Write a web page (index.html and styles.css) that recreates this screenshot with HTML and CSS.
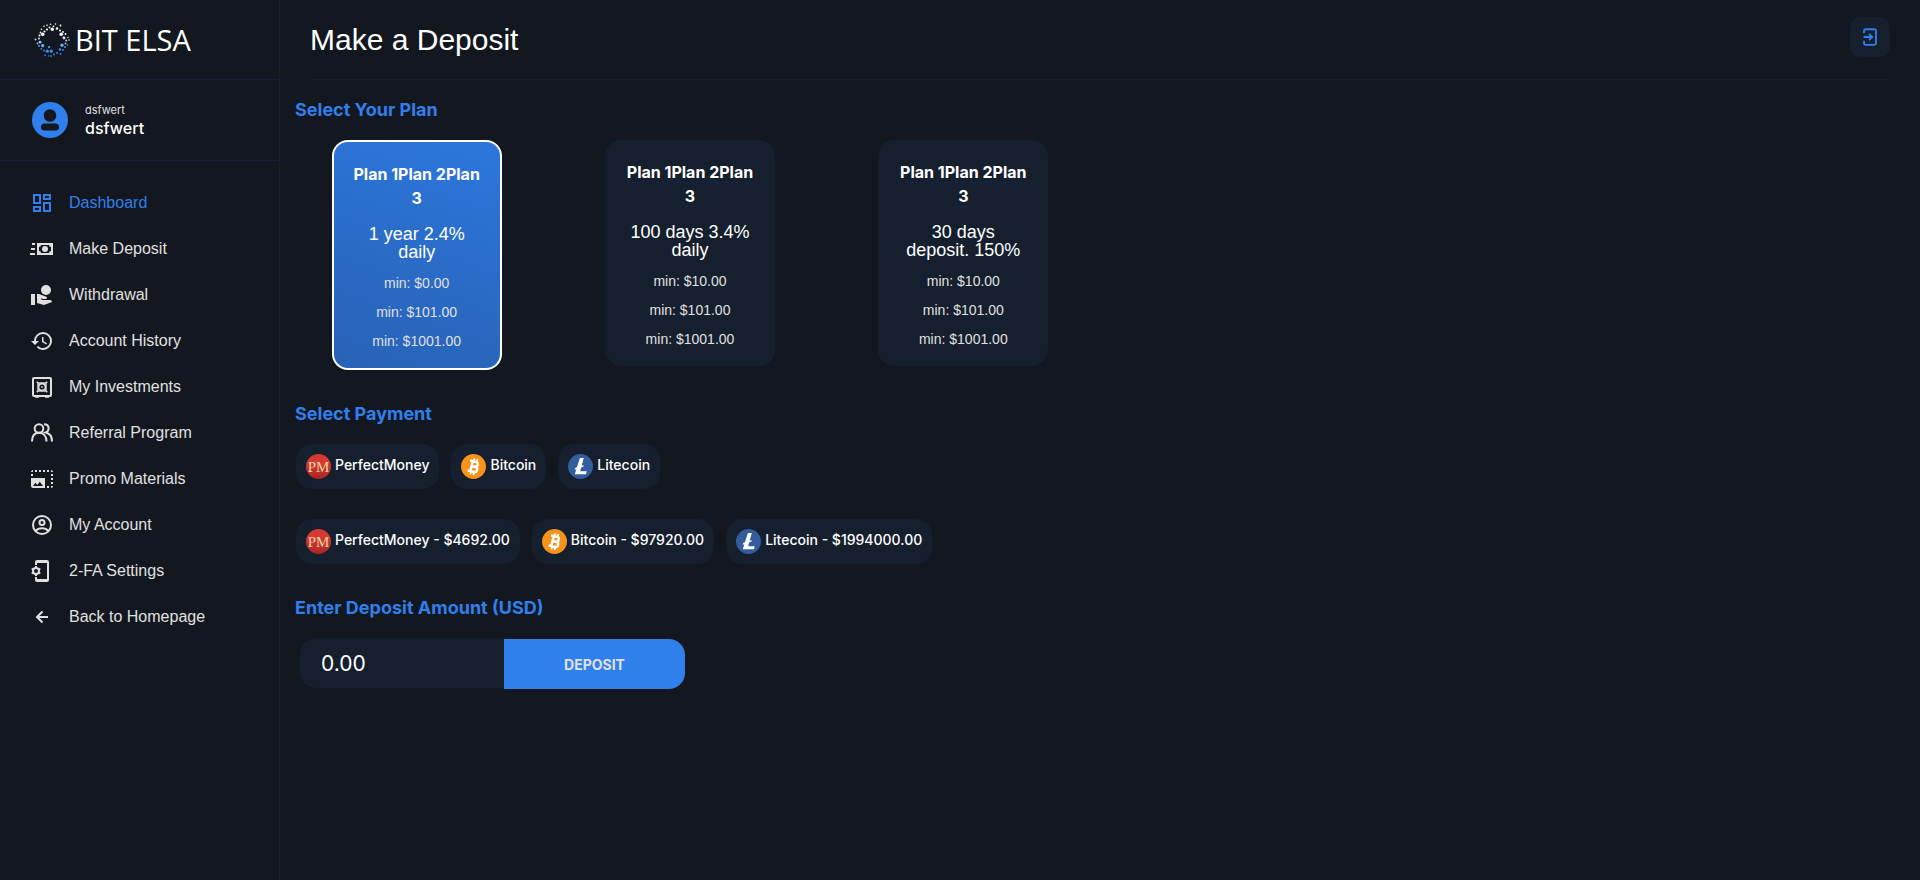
FILE: index.html
```html
<!DOCTYPE html>
<html lang="en">
<head>
    <meta charset="UTF-8">
    <meta name="viewport" content="width=device-width, initial-scale=1.0">
    <title>Make a Deposit</title>
    <link rel="stylesheet" href="styles.css">
</head>
<body>
    <!-- shared coin icons -->
    <svg class="sprites" aria-hidden="true">
        <defs>
            <linearGradient id="pm-bg" x1="0" y1="0" x2="0" y2="1">
                <stop offset="0.4" stop-color="#d43a31"/>
                <stop offset="1" stop-color="#a82424"/>
            </linearGradient>
        </defs>
        <symbol id="coin-btc" viewBox="0 0 32 32">
            <circle cx="16" cy="16" r="16" fill="#f7931a"/>
            <g transform="rotate(14 16 16)" fill="none" stroke="#fff" stroke-width="3.200">
                <path d="M10 9.500h7.500a3.200 3.200 0 0 1 0 6.400H12.500M12.500 15.900h5.600a3.400 3.400 0 0 1 0 6.800H10M13.500 9.500v13.200"/>
                <path d="M14.500 5.500v4M18.500 5.500v4M14.500 22.500v4M18.500 22.500v4" stroke-width="2.200"/>
            </g>
        </symbol>
        <symbol id="coin-ltc" viewBox="0 0 32 32">
            <circle cx="16" cy="16" r="16" fill="#345d9d"/>
            <path d="M15.200 5h5l-2.700 10 2.600-1-.6 2.400-2.700 1-1.200 4.600h8.400l-1 4H8.700l2-6.600-2.200.8.600-2.300 2.300-.9z" fill="#fff"/>
        </symbol>
    </svg>

    <div class="layout">
        <aside class="sidebar">
            <a href="#" class="logo">
                <svg class="logo-mark" viewBox="0 0 36 36">
                    <defs>
                        <linearGradient id="logo-grad" gradientUnits="userSpaceOnUse" x1="0" y1="2" x2="0" y2="34">
                            <stop offset="0.35" stop-color="#fff"/>
                            <stop offset="0.7" stop-color="#5b9df0"/>
                            <stop offset="0.9" stop-color="#2f80ed"/>
                        </linearGradient>
                    </defs>
                    <g fill="url(#logo-grad)">
                        <circle cx="18.300" cy="7.200" r="1.700"/>
                        <circle cx="27.300" cy="12.200" r="1.800"/>
                        <circle cx="8.700" cy="12.200" r="1.800"/>
                        <circle cx="30" cy="16" r="1.400"/>
                        <circle cx="28" cy="23.200" r="1.700"/>
                        <circle cx="8.700" cy="23.800" r="1.700"/>
                        <circle cx="6" cy="20.200" r="1.400"/>
                        <circle cx="17.300" cy="29.200" r="1.700"/>
                        <circle cx="13.300" cy="29.200" r="1.600"/>
                        <circle cx="15" cy="25.200" r="1.100"/>
                        <circle cx="26" cy="27.500" r="1.300"/>
                        <circle cx="23" cy="6.500" r="1.300"/>
                        <circle cx="13" cy="7.500" r="1.100"/>
                        <circle cx="10.500" cy="9.500" r="1.100"/>
                        <circle cx="15.500" cy="5.500" r=".9"/>
                        <circle cx="19.500" cy="4.300" r=".9"/>
                        <circle cx="26" cy="8.500" r="1"/>
                        <circle cx="29" cy="10" r=".9"/>
                        <circle cx="31.500" cy="12" r=".9"/>
                        <circle cx="32.300" cy="18.500" r="1"/>
                        <circle cx="31.500" cy="21.500" r="1"/>
                        <circle cx="31" cy="25" r=".9"/>
                        <circle cx="29" cy="28" r=".9"/>
                        <circle cx="23" cy="31" r="1"/>
                        <circle cx="20" cy="32.500" r=".9"/>
                        <circle cx="10" cy="28.500" r=".9"/>
                        <circle cx="7.300" cy="26.800" r=".9"/>
                        <circle cx="5" cy="24" r=".9"/>
                        <circle cx="3.500" cy="21.500" r=".9"/>
                        <circle cx="5" cy="16.500" r="1"/>
                        <circle cx="5.500" cy="13.500" r="1"/>
                        <circle cx="6.500" cy="10.500" r=".9"/>
                        <circle cx="7.500" cy="7.300" r=".8"/>
                        <circle cx="10" cy="4.200" r=".8"/>
                        <circle cx="13" cy="3.200" r=".8"/>
                        <circle cx="16.500" cy="2.300" r=".8"/>
                        <circle cx="21.500" cy="2" r=".8"/>
                        <circle cx="26.500" cy="3.500" r=".9"/>
                        <circle cx="34" cy="15.500" r=".8"/>
                        <circle cx="35" cy="18" r=".8"/>
                        <circle cx="33.500" cy="23" r=".7"/>
                        <circle cx="26.500" cy="32" r=".9"/>
                        <circle cx="17" cy="34" r=".9"/>
                        <circle cx="14.500" cy="34" r=".8"/>
                        <circle cx="11" cy="33.300" r=".9"/>
                        <circle cx="1.500" cy="17.500" r=".9"/>
                    </g>
                </svg>
                <span>BIT ELSA</span>
            </a>

            <div class="user">
                <svg class="avatar" viewBox="0 0 36 36">
                    <circle cx="18" cy="18" r="18" fill="#2f80ed"/>
                    <circle cx="18" cy="13.500" r="6.300" fill="#13171f"/>
                    <rect x="9" y="21.500" width="18" height="7" rx="3.500" fill="#13171f"/>
                </svg>
                <div>
                    <div class="user-login">dsfwert</div>
                    <div class="user-name">dsfwert</div>
                </div>
            </div>

            <nav class="menu">
                <a href="#" class="active">
                    <svg viewBox="0 0 24 24"><path d="M19 5v2h-4V5h4M9 5v6H5V5h4m10 8v6h-4v-6h4M9 17v2H5v-2h4M21 3h-8v6h8V3zM11 3H3v10h8V3zm10 8h-8v10h8V11zm-10 4H3v6h8v-6z"/></svg>
                    Dashboard
                </a>
                <a href="#">
                    <svg viewBox="0 0 24 24"><path fill-rule="evenodd" d="M7 6h16v12H7zM11 8a2 2 0 0 1-2 2v4a2 2 0 0 1 2 2h8a2 2 0 0 1 2-2v-4a2 2 0 0 1-2-2zM15 9a3 3 0 1 1 0 6 3 3 0 0 1 0-6zM2 6h3v2H2zM1 11h4v2H1zM0 16h5v2H0z"/></svg>
                    Make Deposit
                </a>
                <a href="#">
                    <svg viewBox="0 0 24 24"><path d="M1 11h4v11H1z"/><circle cx="16" cy="7" r="5"/><path d="M20 17h-7l-2.090-.73.330-.94L13 16h2.820c.650 0 1.180-.53 1.180-1.180 0-.49-.31-.93-.77-1.110L8.970 11H7v9.020L14 22l8.010-3c-.01-1.100-.9-2-2.010-2z"/></svg>
                    Withdrawal
                </a>
                <a href="#">
                    <svg viewBox="0 0 24 24"><path d="M13 3a9 9 0 0 0-9 9H1l3.890 3.890.070.140L9 12H6c0-3.870 3.130-7 7-7s7 3.130 7 7-3.130 7-7 7c-1.930 0-3.680-.79-4.940-2.060l-1.420 1.420A8.954 8.954 0 0 0 13 21a9 9 0 0 0 0-18zm-1 5v5l4.280 2.540.720-1.210-3.500-2.080V8H12z"/></svg>
                    Account History
                </a>
                <a href="#">
                    <svg viewBox="0 0 24 24" class="line"><rect x="3" y="3" width="18" height="18" rx="1"/><path d="M5 22h4M15 22h4" stroke-width="1.500"/><circle cx="12" cy="12" r="3.400" stroke-width="1.600"/><path d="M6.800 6.800l2.800 2.800M17.200 6.800l-2.800 2.800M6.800 17.200l2.800-2.800M17.200 17.200l-2.800-2.800" stroke-width="1.600"/><path d="M7.800 8.500v7M16.200 8.500v7M8.500 7.800h7M8.500 16.200h7" stroke-width="1"/><circle cx="12" cy="12" r=".5" stroke-width="1"/></svg>
                    My Investments
                </a>
                <a href="#">
                    <svg viewBox="0 0 24 24" class="line"><circle cx="9" cy="7.500" r="4.300"/><path d="M2 20.500c0-5.500 2.500-8.700 7-8.700s7.500 3.200 7.500 8.700M14 3.300c3 0 4.600 1.700 4.600 4.100 0 2-1.100 3.300-2.900 4.100 4 .8 6.300 3.800 6.300 9"/></svg>
                    Referral Program
                </a>
                <a href="#">
                    <svg viewBox="0 0 24 24"><path d="M21 15h2v2h-2v-2zm0-4h2v2h-2v-2zm2 8h-2v2c1 0 2-1 2-2zM13 3h2v2h-2V3zm8 4h2v2h-2V7zm0-4v2h2c0-1-1-2-2-2zM1 7h2v2H1V7zm16-4h2v2h-2V3zm0 16h2v2h-2v-2zM3 3C2 3 1 4 1 5h2V3zm6 0h2v2H9V3zM5 3h2v2H5V3zm-4 8v8c0 1.100.9 2 2 2h12V11H1zm2 8 2.500-3.210 1.790 2.150 2.500-3.220L13 19H3z"/></svg>
                    Promo Materials
                </a>
                <a href="#">
                    <svg viewBox="0 0 24 24" class="line"><circle cx="12" cy="12" r="9"/><circle cx="12" cy="9.500" r="2.500"/><path d="M5.500 18c1.500-1.700 3.800-2.700 6.500-2.700s5 1 6.500 2.700"/></svg>
                    My Account
                </a>
                <a href="#">
                    <svg viewBox="0 0 24 24" class="line"><path d="M6 6V3a1 1 0 0 1 1-1h10a1 1 0 0 1 1 1v18a1 1 0 0 1-1 1H7a1 1 0 0 1-1-1v-3"/><path d="M6.500 3h11M6.500 21h11"/><circle cx="6" cy="12" r="3"/><path d="M6 7v2M6 15v2M1.700 9.500l1.700 1M8.600 13.500l1.700 1M1.700 14.500l1.700-1M8.600 10.500l1.700-1"/></svg>
                    2-FA Settings
                </a>
                <a href="#">
                    <svg viewBox="0 0 24 24" class="line"><path d="M18 12H7M12.500 6.500 7 12l5.500 5.500"/></svg>
                    Back to Homepage
                </a>
            </nav>
        </aside>

        <main class="content">
            <header class="topbar">
                <h1>Make a Deposit</h1>
                <button type="button" class="logout" aria-label="Logout">
                    <svg viewBox="0 0 24 24" class="line"><path d="M5.500 8V5.500a2 2 0 0 1 2-2h9a2 2 0 0 1 2 2v13a2 2 0 0 1-2 2h-9a2 2 0 0 1-2-2V16M5 12h9M11 8.500l3.500 3.500-3.500 3.500"/></svg>
                </button>
            </header>

            <form>
                <h2>Select Your Plan</h2>
                <div class="plans">
                    <label class="plan">
                        <input type="radio" name="plan" checked>
                        <span class="plan-name"><span>Plan 1Plan 2Plan 3</span></span>
                        <span class="plan-rate">1 year 2.4% daily</span>
                        <span class="plan-min">min: $0.00</span>
                        <span class="plan-min">min: $101.00</span>
                        <span class="plan-min">min: $1001.00</span>
                    </label>
                    <label class="plan">
                        <input type="radio" name="plan">
                        <span class="plan-name"><span>Plan 1Plan 2Plan 3</span></span>
                        <span class="plan-rate">100 days 3.4% daily</span>
                        <span class="plan-min">min: $10.00</span>
                        <span class="plan-min">min: $101.00</span>
                        <span class="plan-min">min: $1001.00</span>
                    </label>
                    <label class="plan">
                        <input type="radio" name="plan">
                        <span class="plan-name"><span>Plan 1Plan 2Plan 3</span></span>
                        <span class="plan-rate">30 days deposit. 150%</span>
                        <span class="plan-min">min: $10.00</span>
                        <span class="plan-min">min: $101.00</span>
                        <span class="plan-min">min: $1001.00</span>
                    </label>
                </div>

                <h2>Select Payment</h2>
                <div class="payments">
                    <label class="payment">
                        <input type="radio" name="payment">
                        <svg viewBox="0 0 25 25">
                            <circle cx="12.500" cy="12.500" r="12.500" fill="url(#pm-bg)"/>
                            <text x="12.500" y="18" text-anchor="middle" class="pm-text">PM</text>
                        </svg>
                        <span>PerfectMoney</span>
                    </label>
                    <label class="payment">
                        <input type="radio" name="payment">
                        <svg><use href="#coin-btc"/></svg>
                        <span>Bitcoin</span>
                    </label>
                    <label class="payment">
                        <input type="radio" name="payment">
                        <svg><use href="#coin-ltc"/></svg>
                        <span>Litecoin</span>
                    </label>
                </div>
                <div class="payments">
                    <label class="payment">
                        <input type="radio" name="payment">
                        <svg viewBox="0 0 25 25">
                            <circle cx="12.500" cy="12.500" r="12.500" fill="url(#pm-bg)"/>
                            <text x="12.500" y="18" text-anchor="middle" class="pm-text">PM</text>
                        </svg>
                        <span>PerfectMoney - $4692.00</span>
                    </label>
                    <label class="payment">
                        <input type="radio" name="payment">
                        <svg><use href="#coin-btc"/></svg>
                        <span>Bitcoin - $97920.00</span>
                    </label>
                    <label class="payment">
                        <input type="radio" name="payment">
                        <svg><use href="#coin-ltc"/></svg>
                        <span>Litecoin - $1994000.00</span>
                    </label>
                </div>

                <h2><label for="amount">Enter Deposit Amount (USD)</label></h2>
                <div class="amount-row">
                    <input type="text" id="amount" name="amount" value="0.00">
                    <button type="submit">DEPOSIT</button>
                </div>
            </form>
        </main>
    </div>
</body>
</html>
```

FILE: styles.css
```css
* {
    box-sizing: border-box;
}
body {
    margin: 0;
    background-color: #13171f;
    color: #fff;
    font-family: "Liberation Sans", Arial, sans-serif;
    font-size: 16px;
}
a {
    color: inherit;
    text-decoration: none;
}
.sprites {
    position: absolute;
    width: 0;
    height: 0;
}
.line {
    fill: none;
    stroke: currentColor;
    stroke-width: 2;
}

/* Sidebar */
.layout {
    display: flex;
    min-height: 100vh;
}
.sidebar {
    flex: 0 0 280px;
    border-right: 1px solid #181f35;
}
.logo {
    display: flex;
    align-items: center;
    gap: 5px;
    height: 80px;
    padding-left: 34px;
    border-bottom: 1px solid #17203a;
    font-family: "Open Sans", sans-serif;
    font-size: 29px;
    font-weight: 400;
}
.logo-mark {
    width: 36px;
    height: 36px;
}
.user {
    display: flex;
    align-items: center;
    gap: 17px;
    height: 81px;
    padding-left: 32px;
    border-bottom: 1px solid #17203a;
    font-family: Inter, sans-serif;
}
.avatar {
    width: 36px;
    height: 36px;
}
.user-login {
    color: #e0e0e0;
    font-size: 11px;
    line-height: 15px;
}
.user-name {
    font-size: 16px;
    font-weight: 500;
    line-height: 20px;
}
.menu {
    padding-top: 19px;
}
.menu a {
    display: flex;
    align-items: center;
    gap: 15px;
    height: 46px;
    padding-left: 30px;
    color: #e0e0e0;
    line-height: 20px;
}
.menu a.active {
    color: #2f80ed;
}
.menu svg {
    width: 24px;
    height: 24px;
}
.menu svg:not(.line) {
    fill: currentColor;
}

/* Content */
.content {
    flex: 1;
}
.topbar {
    display: flex;
    justify-content: space-between;
    align-items: center;
    height: 80px;
    margin: 0 30px;
    padding-bottom: 5px;
    border-bottom: 1px solid #161f2e;
}
.topbar h1 {
    margin: 6px 0 0;
    font-size: 30px;
    font-weight: 400;
}
.logout {
    display: flex;
    align-items: center;
    justify-content: center;
    width: 40px;
    height: 40px;
    border: none;
    border-radius: 10px;
    background-color: #161f2e;
    color: #2f80ed;
    cursor: pointer;
}
.logout svg {
    width: 22px;
    height: 22px;
    flex: none;
}
h2 {
    margin: 32px 15px 18px;
    color: #2f80ed;
    font-family: Inter, sans-serif;
    font-size: 18px;
    font-weight: 700;
    line-height: 24px;
}
.topbar + form h2:first-child {
    margin-top: 18px;
}
.plans {
    display: grid;
    grid-template-columns: repeat(6, 1fr);
    justify-items: center;
    align-items: start;
}
.plan {
    width: 170px;
    padding: 20px 20px 12px;
    border-radius: 16px;
    background-color: #161f2e;
    text-align: center;
    cursor: pointer;
}
.plan:has(input:checked) {
    padding: 20px 18px 12px;
    border: 2px solid #fff;
    background: linear-gradient(200deg, #2c77dc, #2862b5);
}
.plan input,
.payment input {
    position: absolute;
    opacity: 0;
}
.plan > span {
    display: block;
}
.plan-name {
    margin-bottom: 15px;
    font-family: Inter, sans-serif;
    font-weight: 700;
    line-height: 24px;
}
.plan-name span {
    border-bottom: 1px dashed #16265a;
}
.plan:has(input:checked) .plan-name span {
    border-color: transparent;
}
.plan-rate {
    margin-bottom: 8px;
    font-size: 18px;
    line-height: 18px;
}
.plan-min {
    color: #e0e0e0;
    font-size: 14px;
    line-height: 29px;
}
.payments {
    display: flex;
    gap: 12px;
    margin: 0 16px 30px;
}
.payment {
    display: flex;
    gap: 4px;
    padding: 10px;
    border-radius: 16px;
    background-color: #161f2e;
    font-family: Inter, sans-serif;
    font-size: 14px;
    font-weight: 500;
    line-height: 22px;
    cursor: pointer;
}
.payment svg {
    width: 25px;
    height: 25px;
}
.pm-text {
    fill: #f0d3a0;
    font-family: "Liberation Serif", serif;
    font-size: 15px;
}
.amount-row {
    display: flex;
    margin: 0 20px;
}
.amount-row input {
    width: 204px;
    height: 50px;
    padding: 0 21px;
    border: none;
    border-radius: 16px 0 0 16px;
    background-color: #161f2e;
    color: #fff;
    font-family: Inter, sans-serif;
    font-size: 21px;
}
.amount-row button {
    width: 181px;
    height: 50px;
    margin-top: 1px;
    border: none;
    border-radius: 0 16px 16px 0;
    background-color: #2f80ed;
    color: #e0e0e0;
    font-family: Inter, sans-serif;
    font-size: 14px;
    font-weight: 700;
    cursor: pointer;
}
```
